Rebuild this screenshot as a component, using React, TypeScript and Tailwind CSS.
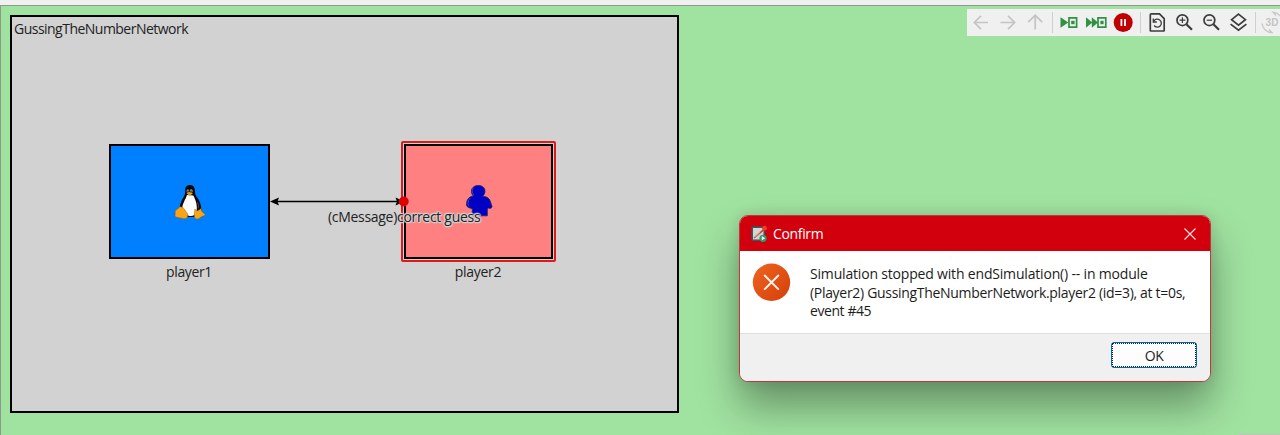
import type { ReactNode } from 'react';

function ToolIcon({ children, color = '#3c3c3c' }: { children: ReactNode; color?: string }) {
  return (
    <span className="flex h-[27px] w-[27px] shrink-0 items-center justify-center">
      <svg width="27" height="27" viewBox="0 0 27 27" fill="none" stroke={color} strokeWidth="1.7">
        {children}
      </svg>
    </span>
  );
}

function Separator() {
  return (
    <span className="flex w-[7px] shrink-0 justify-center">
      <span className="h-[21px] w-px bg-[#cfcfcf]" />
    </span>
  );
}

function Toolbar() {
  return (
    <div className="absolute top-[9px] right-0 flex h-[27px] w-[313px] items-center overflow-hidden bg-[#f0f0f0] pl-px">
      <ToolIcon color="#c4c4c4">
        <path d="M20 13.5H6.5M13 6.8L6.3 13.5L13 20.2" />
      </ToolIcon>
      <ToolIcon color="#c4c4c4">
        <path d="M5.5 13.5H19.5M13 6.8L19.7 13.5L13 20.2" />
      </ToolIcon>
      <ToolIcon color="#c4c4c4">
        <path d="M13.2 20.5V6.5M6.2 13.2L13.2 6.3L20.2 13.2" />
      </ToolIcon>
      <Separator />
      <ToolIcon color="#2f9142">
        <path d="M4.5 8.3V18.7L12.3 13.5Z" fill="#2f9142" stroke="none" />
        <path d="M13 8.9H20.6V18.1H13Z" />
        <rect x="15.2" y="11.8" width="3.4" height="3.4" fill="#2f9142" stroke="none" />
      </ToolIcon>
      <ToolIcon color="#2f9142">
        <path d="M3 8.3V18.7L9.3 13.5ZM8.8 8.3V18.7L15 13.5Z" fill="#2f9142" stroke="none" />
        <path d="M15 8.9H22.8V18.1H15Z" />
        <rect x="17.4" y="11.8" width="3.2" height="3.4" fill="#2f9142" stroke="none" />
      </ToolIcon>
      <ToolIcon>
        <circle cx="13.2" cy="13.5" r="9.5" fill="#c00000" stroke="none" />
        <path d="M11.4 10V17M15 10V17" stroke="#fff" strokeWidth="1.8" />
      </ToolIcon>
      <Separator />
      <ToolIcon>
        <path d="M7.3 4.9H15.5L20.2 9.6V21.5Q20.2 22 19.7 22H6.8Q6.3 22 6.3 21.5V5.8Q6.3 4.9 7.3 4.9Z" />
        <path d="M9.8 12.2A4 4 0 1 1 10.1 16.5" strokeWidth="1.3" />
        <path d="M9.3 9.6V13H12.8" strokeWidth="1.3" />
      </ToolIcon>
      <ToolIcon>
        <circle cx="11.4" cy="11.2" r="5.4" />
        <path d="M15.4 15.2L21 20.8" strokeWidth="2.2" />
        <path d="M8.5 11.2H14.3M11.4 8.3V14.1" strokeWidth="1.2" />
      </ToolIcon>
      <ToolIcon>
        <circle cx="11.4" cy="11.2" r="5.4" />
        <path d="M15.4 15.2L21 20.8" strokeWidth="2.2" />
        <path d="M8.7 11.2H14.1" strokeWidth="1.2" />
      </ToolIcon>
      <ToolIcon>
        <path d="M13.5 5.2L20.4 10.7L13.5 16.2L6.6 10.7Z" />
        <path d="M5.6 15.1L13.5 21.2L21.4 15.1" />
      </ToolIcon>
      <Separator />
      <ToolIcon color="#c8c8c8">
        <path d="M3 14.5A10.3 10.3 0 0 0 13 23.6L10 20.5M23.5 13A10.3 10.3 0 0 0 14 3.2L17 6.5" strokeWidth="1.4" />
        <text x="6.6" y="17.3" fontFamily="Liberation Sans, sans-serif" fontSize="10" fontWeight="700" fill="#c4c4c4" stroke="none">
          3D
        </text>
      </ToolIcon>
    </div>
  );
}

function Penguin() {
  return (
    <svg width="32" height="36" viewBox="0 0 32 36">
      <path d="M16 1C12.4 1 10.9 3.5 11.2 7C11.5 11 9.3 13 7.5 17C6 20.5 5 24 5.7 29L13 33H22L27 28C28.3 22 25.2 16 22.8 13C20.4 10 21.4 7 20.6 4.5C20 2 18.4 1 16 1Z" fill="#080808" />
      <path d="M13 11C11.8 15 8 20 8.2 25L14 31.5C18 33 21 31.5 22.4 28C23.8 22 21.8 16 19.3 11.5Z" fill="#fff" />
      <ellipse cx="13.8" cy="6.9" rx="1.3" ry="1.7" fill="#999" />
      <ellipse cx="17.2" cy="6.9" rx="1.5" ry="1.7" fill="#aaa" />
      <circle cx="14" cy="7.2" r=".7" />
      <circle cx="17" cy="7.2" r=".7" />
      <path d="M12.4 9L15.2 7.9L19 9.2L15.5 12Z" fill="#e8a012" />
      <path d="M5.8 22.5L9 23.5L13.8 30C14.4 33 12.4 35 9.8 34.7L1.6 33C.4 32.1 1.5 30 1.2 27.5C1.1 25.5 4 26 5.8 22.5Z" fill="#f8a414" stroke="#74500c" strokeWidth=".4" />
      <path d="M20.9 25C22.4 28 24.7 26.5 26.6 24.4L28 27.8L31.2 30.3C31.3 31.8 27.4 32.4 25.1 34.4C22.8 35.7 20 34.8 20.2 31.5Z" fill="#f8a414" stroke="#74500c" strokeWidth=".4" />
      <path d="M23 18C24.7 20 24.7 22.5 24.2 24.5" stroke="#777" strokeWidth=".6" fill="none" />
    </svg>
  );
}

function Person() {
  return (
    <svg width="30" height="34" viewBox="0 0 30 34">
      <path
        d="M14.5 1.5C18.6 1.5 21 4 21 7C21 9.5 19.8 11.2 18.7 12.2C22.5 12.4 25.2 14 26.2 17L28 22.5C27.8 24.4 26 24.8 24.7 24L23.3 25V31.8H8.3V24.5C6.3 24.3 2.8 23.5 2.5 21C2.4 17 4 12.5 9.4 12C8.2 10.8 7.2 9 7.4 7C7.7 3.5 10.5 1.5 14.5 1.5Z"
        fill="#0000c4"
        stroke="#202060"
        strokeWidth=".8"
      />
      <path d="M10 3.6C7.8 5.5 7.8 9 10 11.2M6.4 14C4 16 3.2 20 5 22.4" fill="none" stroke="#4c4ca4" strokeWidth="1" />
    </svg>
  );
}

function Network() {
  return (
    <div className="absolute top-[15px] left-[10px] h-[398px] w-[669px] border-2 border-black bg-[#d2d2d2] text-[#222]">
      <div className="px-[2px] pt-[3px] text-[14px] leading-[18px] tracking-[-0.52px] whitespace-nowrap">
        GussingTheNumberNetwork
      </div>
      <div className="absolute top-[127px] left-[97px] flex h-[115px] w-[161px] items-center justify-center border-2 border-black bg-[#0080ff]">
        <Penguin />
      </div>
      <div className="absolute top-[246px] left-[97px] w-[160px] text-center text-[14px] leading-[18px] tracking-[-0.35px]">player1</div>
      <div className="absolute top-[124px] left-[389px] h-[121px] w-[155px] rounded-[2px] border-2 border-[#e01818] p-px">
        <div className="flex h-full w-full items-center justify-center border-2 border-black bg-[#ff8080] pb-px">
          <Person />
        </div>
      </div>
      <div className="absolute top-[246px] left-[391px] w-[150px] text-center text-[14px] leading-[18px] tracking-[-0.3px]">player2</div>
      <svg className="absolute top-[177px] left-[256px]" width="146" height="16" viewBox="0 0 146 16">
        <path d="M7 7.5H136" stroke="#000" strokeWidth="1.3" />
        <path d="M2 7.5L11 3.5L9.5 7.5L11 11.5ZM136.5 7.5L127.5 3.5L129 7.5L127.5 11.5Z" fill="#000" />
        <circle cx="135.7" cy="7.5" r="5" fill="#e00000" />
      </svg>
      <div className="absolute top-[191px] left-[316px] text-[14px] leading-[18px] tracking-[-0.3px] whitespace-nowrap [text-shadow:-1px_0_1px_#d2d2d2,1px_0_1px_#d2d2d2,0_-1px_1px_#d2d2d2,0_1px_1px_#d2d2d2,-1px_-1px_1px_#d2d2d2,1px_1px_1px_#d2d2d2,0_0_2px_#d2d2d2,0_0_2px_#d2d2d2]">
        (cMessage)correct guess
      </div>
    </div>
  );
}

function AppGlyph() {
  return (
    <svg width="17" height="18" viewBox="0 0 17 18">
      <rect x="1.2" y="2.2" width="12" height="13" fill="#d4d8cc" stroke="#34566c" strokeWidth="1.5" />
      <path d="M3 13L14 3.5" stroke="#d23b30" strokeWidth="1.6" />
      <path d="M3 12C6 11 8 9 9 6" stroke="#b4c2b8" fill="none" />
      <circle cx="13.6" cy="3.2" r="2.4" fill="#f03a2a" />
      <circle cx="12" cy="13.3" r="3.6" fill="#31966a" />
      <path d="M10.8 11.1V15.5L14.2 13.3Z" fill="#fff" />
    </svg>
  );
}

function ConfirmDialog() {
  return (
    <div className="absolute top-[215px] left-[739px] flex h-[167px] w-[472px] flex-col overflow-hidden rounded-[9px] border border-[#c0393a] bg-white shadow-[0_24px_40px_rgba(0,0,0,0.36),0_0_14px_rgba(0,0,0,0.12)]">
      <div className="flex h-[35px] shrink-0 items-center bg-[#d2000c] pr-[14px] pl-[11px]">
        <AppGlyph />
        <span className="ml-[5px] text-[14px] tracking-[-0.35px] text-white">Confirm</span>
        <svg className="ml-auto" width="12" height="12" viewBox="0 0 12 12" stroke="#ffe4e4" strokeWidth="1.1">
          <path d="M.5 .5L11.5 11.5M11.5 .5L.5 11.5" />
        </svg>
      </div>
      <div className="flex h-[82px] shrink-0 pl-[12px]">
        <svg className="mt-[12px] shrink-0" width="39" height="39" viewBox="0 0 39 39">
          <defs>
            <linearGradient id="alert" x1="0" y1="0" x2="1" y2="1">
              <stop offset="0" stopColor="#ef641f" />
              <stop offset="1" stopColor="#d43f0a" />
            </linearGradient>
          </defs>
          <circle cx="19.5" cy="19.3" r="18.7" fill="url(#alert)" />
          <path d="M12.2 12L26.8 26.6M26.8 12L12.2 26.6" stroke="#fff4ec" strokeWidth="2" />
        </svg>
        <div className="mt-[14px] ml-[19px] text-[14px] leading-[18.7px] whitespace-nowrap text-[#1c1c1c]">
          <p className="tracking-[-0.18px]">Simulation stopped with endSimulation() -- in module</p>
          <p className="tracking-[-0.31px]">(Player2) GussingTheNumberNetwork.player2 (id=3), at t=0s,</p>
          <p className="tracking-[-0.42px]">event #45</p>
        </div>
      </div>
      <div className="flex flex-1 justify-end border-t border-[#dfdfdf] bg-[#f0f0f0] pt-[8px] pr-[13px]">
        <button className="flex h-[26px] w-[86px] rounded-[3px] border border-[#0067b8] bg-[#fdfdfd] text-[14px] text-[#1c1c1c]">
          <span className="flex h-full w-full items-center justify-center border border-dotted border-[#222] tracking-[-0.5px]">OK</span>
        </button>
      </div>
    </div>
  );
}

export default function App() {
  return (
    <div className="flex h-[435px] w-[1280px] flex-col overflow-hidden bg-[#f0f0f0] pt-[5px] font-['Open_Sans','Noto_Sans',sans-serif]">
      <main className="flex-1 border-t border-l border-[#8c9a8c] bg-[#a0e2a0]">
        <Network />
        <Toolbar />
        <ConfirmDialog />
        <span className="absolute top-[434px] left-[1238px] h-px w-[42px] bg-[#b9c6b9]" />
      </main>
    </div>
  );
}
